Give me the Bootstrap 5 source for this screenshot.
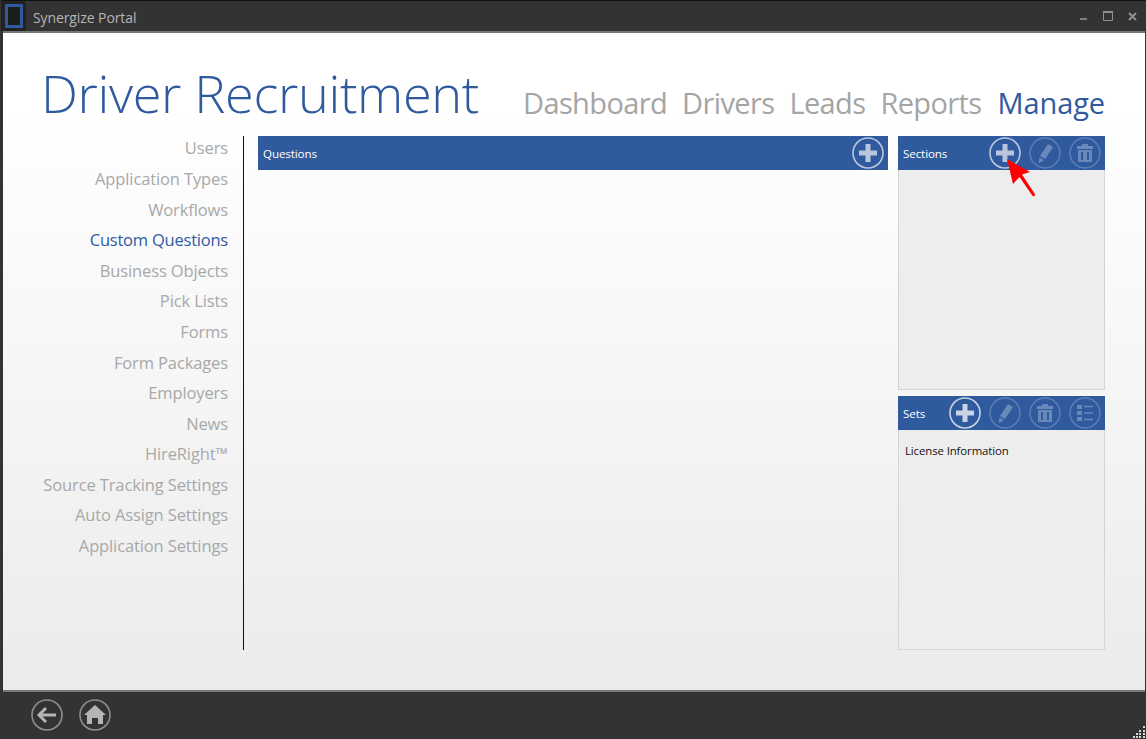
<!DOCTYPE html>
<html lang="en">
<head>
<meta charset="utf-8">
<title>Synergize Portal</title>
<link href="https://cdn.jsdelivr.net/npm/bootstrap@5.3.0/dist/css/bootstrap.min.css" rel="stylesheet">
<style>
html,body{height:739px;overflow:hidden;margin:0}
body{background:#333;font-family:"Open Sans","Noto Sans",sans-serif;width:1146px}
.win{height:739px;width:1146px;border:solid #333;border-width:0 1px 0 3px;border-top:1px solid #111;position:relative}
.tbar{height:30px;background:#333;color:#b5b5b5;font-size:14px;margin-left:-3px}
.appico{width:25px;height:30px;background:#222;margin-left:1px}
.appico span{display:block;width:18px;height:24px;border:3px solid #2f5a9e;background:#1c1c1c}
.tname{margin-left:7px;letter-spacing:-.1px;padding-top:2px}
.wbtns{color:#8a9298;gap:15px;padding-right:8px}
.main{height:659px;border-top:2px solid #777;background:linear-gradient(#fff 0,#fff 80px,#ebebeb 100%)}
.hdr{height:103px;padding:0 40px 0 38px}
.apptitle{font-size:52.3px;font-weight:300;color:#2f5a9e;line-height:1;margin:0;padding-bottom:17px;letter-spacing:-.35px;font-family:"Open Sans",sans-serif}
.topnav{gap:15px;padding-bottom:15px;font-size:29px;line-height:1.2;color:#a5a5a5;letter-spacing:-.62px}
.topnav .on{color:#2f5a9e;letter-spacing:-.1px;margin-left:1px}
.bodyrow{height:514px}
.sidenav{width:241px;padding:.35px 15px 0 0;border-right:1px solid #111;box-sizing:border-box;font-size:16.5px;color:#a8a8a8;text-align:right;flex:none;letter-spacing:-.12px}
.sidenav div{height:30.6px;line-height:24px}
.sidenav .on{color:#2f5a9e;letter-spacing:-.22px}
.centerc{width:630px;margin-left:14px;flex:none}
.rightc{width:207px;margin-left:10px;flex:none;gap:6px}
.bluebar{height:34px;background:#2f5a9e;color:#fff;font-size:11.6px;letter-spacing:-.1px}
.bluebar>span{padding-top:2px}
.centerc .bluebar{padding:0 4px 0 5px}
.rightc .bluebar{padding:0 4px 0 5px}
.rbox{background:#ededed;border:1px solid #d4d4d4;border-top:0;font-size:11.4px;color:#111}
.sec{height:254px}
.setsx{flex:1 1 auto}
.rbtns{gap:8px}
.footb{height:48px;border-top:2px solid #777;background:#333;padding-left:28px;gap:16px;margin-top:0;position:relative}
.lic{padding:12px 6px;letter-spacing:-.1px}
.annot{position:absolute;left:997px;top:149px;pointer-events:none}
.grip{position:absolute;right:0;bottom:0}
svg{display:block}
</style>
</head>
<body>
<div class="win d-flex flex-column">
  <div class="tbar d-flex align-items-center">
    <div class="appico d-flex align-items-center justify-content-center"><span></span></div>
    <div class="tname">Synergize Portal</div>
    <div class="wbtns ms-auto d-flex align-items-center">
      <svg width="8" height="10" viewBox="0 0 8 10"><rect x="0" y="7" width="7" height="2" fill="#77828a"/></svg>
      <svg width="10" height="10" viewBox="0 0 10 10"><path d="M.5 1.500h9v8h-9z" fill="none" stroke="#8a9298" stroke-width="1"/><rect y="0" width="10" height="2" fill="#8a9298"/></svg>
      <svg width="9" height="9" viewBox="0 0 9 9"><path d="M1 1l7 7M8 1l-7 7" stroke="#8a9298" stroke-width="2"/></svg>
    </div>
  </div>
  <div class="main d-flex flex-column">
    <div class="hdr d-flex justify-content-between align-items-end">
      <h1 class="apptitle">Driver Recruitment</h1>
      <div class="topnav d-flex"><span>Dashboard</span><span>Drivers</span><span>Leads</span><span>Reports</span><span class="on">Manage</span></div>
    </div>
    <div class="bodyrow d-flex">
      <div class="sidenav">
        <div>Users</div><div>Application Types</div><div>Workflows</div><div class="on">Custom Questions</div><div>Business Objects</div><div>Pick Lists</div><div>Forms</div><div>Form Packages</div><div>Employers</div><div>News</div><div>HireRight™</div><div>Source Tracking Settings</div><div>Auto Assign Settings</div><div>Application Settings</div>
      </div>
      <div class="centerc">
        <div class="bluebar d-flex align-items-center justify-content-between">
          <span>Questions</span>
          <svg width="32" height="32" viewBox="0 0 32 32"><circle cx="16" cy="16" r="15" fill="none" stroke="#b9c6dc" stroke-width="1.6"/><path d="M16 7v18M7 16h18" stroke="#b9c6dc" stroke-width="5"/></svg>
        </div>
      </div>
      <div class="rightc d-flex flex-column">
        <div class="sec d-flex flex-column">
          <div class="bluebar d-flex align-items-center justify-content-between flex-none">
            <span>Sections</span>
            <div class="rbtns d-flex">
              <svg width="32" height="32" viewBox="0 0 32 32"><circle cx="16" cy="16" r="15" fill="none" stroke="#b9c6dc" stroke-width="1.6"/><path d="M16 7v18M7 16h18" stroke="#b9c6dc" stroke-width="5"/></svg>
              <svg width="32" height="32" viewBox="0 0 32 32"><circle cx="16" cy="16" r="15" fill="none" stroke="#5f80b4" stroke-width="1.4"/><path d="M19 7l5 3-8 12-5-3zM10.500 20.500l4.500 2.700-5.500 3z" fill="#6a89ba"/></svg>
              <svg width="32" height="32" viewBox="0 0 32 32"><circle cx="16" cy="16" r="15" fill="none" stroke="#5f80b4" stroke-width="1.4"/><path d="M13 7h6v2h5v3H8V9h5zM9 13h14v12H9zM12 15v8h2v-8zM18 15v8h2v-8z" fill="#6a89ba" fill-rule="evenodd"/></svg>
            </div>
          </div>
          <div class="rbox flex-grow-1"></div>
        </div>
        <div class="setsx d-flex flex-column">
          <div class="bluebar d-flex align-items-center justify-content-between">
            <span>Sets</span>
            <div class="rbtns d-flex">
              <svg width="32" height="32" viewBox="0 0 32 32"><circle cx="16" cy="16" r="15" fill="none" stroke="#c8d3e4" stroke-width="1.6"/><path d="M16 7v18M7 16h18" stroke="#c8d3e4" stroke-width="5"/></svg>
              <svg width="32" height="32" viewBox="0 0 32 32"><circle cx="16" cy="16" r="15" fill="none" stroke="#5f80b4" stroke-width="1.4"/><path d="M19 7l5 3-8 12-5-3zM10.500 20.500l4.500 2.700-5.500 3z" fill="#6a89ba"/></svg>
              <svg width="32" height="32" viewBox="0 0 32 32"><circle cx="16" cy="16" r="15" fill="none" stroke="#5f80b4" stroke-width="1.4"/><path d="M13 7h6v2h5v3H8V9h5zM9 13h14v12H9zM12 15v8h2v-8zM18 15v8h2v-8z" fill="#6a89ba" fill-rule="evenodd"/></svg>
              <svg width="32" height="32" viewBox="0 0 32 32"><circle cx="16" cy="16" r="15" fill="none" stroke="#5f80b4" stroke-width="1.4"/><path d="M8 8h5v4H8zM8 14h5v4H8zM8 20h5v4H8z" fill="#6a89ba"/><path d="M15 9.500h9M15 16h9M15 22.500h9" stroke="#6a89ba" stroke-width="1.6"/></svg>
            </div>
          </div>
          <div class="rbox flex-grow-1 lic">License Information</div>
        </div>
      </div>
    </div>
  </div>
  <div class="footb d-flex align-items-center">
    <svg width="32" height="32" viewBox="0 0 32 32"><circle cx="16" cy="16" r="15" fill="none" stroke="#8e8e8e" stroke-width="1.6"/><path d="M15 9l-7 7 7 7M9 16h16" fill="none" stroke="#b5b5b5" stroke-width="3"/></svg>
    <svg width="32" height="32" viewBox="0 0 32 32"><circle cx="16" cy="16" r="15" fill="none" stroke="#8e8e8e" stroke-width="1.6"/><path d="M16 6l11 10h-3v9h-5v-6h-6v6H8v-9H5z" fill="#b5b5b5"/></svg>
    <svg class="grip" width="12" height="12" viewBox="0 0 12 12" fill="#d8d8d8"><path d="M10 0h2v2h-2zM6 4h2v2H6zM10 4h2v2h-2zM3 7h2v2H3zM6 7h2v2H6zM10 7h2v2h-2zM0 10h2v2H0zM3 10h2v2H3zM6 10h2v2H6zM10 10h2v2h-2z"/></svg>
  </div>
  <svg class="annot" width="40" height="50" viewBox="0 0 40 50"><path d="M7 9L30 22 22 24.500 35.500 45 33 46.500 19.500 27 13 34z" fill="#f00"/></svg>
</div>
<script src="https://cdn.jsdelivr.net/npm/bootstrap@5.3.0/dist/js/bootstrap.bundle.min.js"></script>
</body>
</html>
